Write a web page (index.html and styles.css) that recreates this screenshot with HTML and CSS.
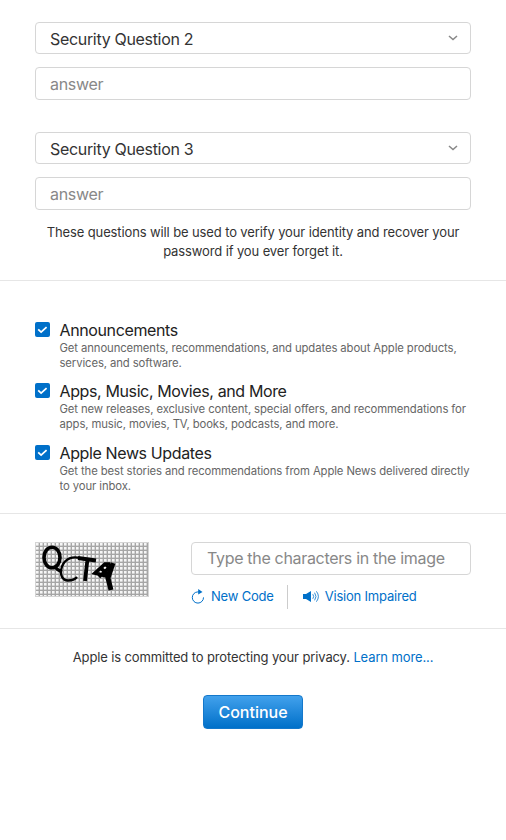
FILE: index.html
```html
<!DOCTYPE html>
<html lang="en">
<head>
    <meta charset="UTF-8">
    <meta name="viewport" content="width=device-width, initial-scale=1.0">
    <title>Create Your Apple ID</title>
    <link rel="stylesheet" href="styles.css">
</head>
<body>
    <form>
        <!-- Security questions -->
        <section class="questions">
            <div class="question">
                <div class="select-box">
                    <select class="field" aria-label="Security Question 2">
                        <option>Security Question 2</option>
                    </select>
                    <svg class="chevron" viewBox="0 0 10 6"><path d="M1 1l4 3.6L9 1"/></svg>
                </div>
                <input class="field answer" type="text" placeholder="answer">
            </div>
            <div class="question">
                <div class="select-box">
                    <select class="field" aria-label="Security Question 3">
                        <option>Security Question 3</option>
                    </select>
                    <svg class="chevron" viewBox="0 0 10 6"><path d="M1 1l4 3.6L9 1"/></svg>
                </div>
                <input class="field answer" type="text" placeholder="answer">
            </div>
            <p class="note">These questions will be used to verify your identity and recover your<br>password if you ever forget it.</p>
        </section>

        <!-- Email preferences -->
        <section class="preferences">
            <label class="preference">
                <input type="checkbox" checked>
                <svg class="check" viewBox="0 0 15 15"><path d="M3.2 7.4l2.9 2.7 5.500-5"/></svg>
                <span class="preference-text">
                    <span class="title">Announcements</span>
                    <span class="desc">Get announcements, recommendations, and updates about Apple products,<br>services, and software.</span>
                </span>
            </label>
            <label class="preference">
                <input type="checkbox" checked>
                <svg class="check" viewBox="0 0 15 15"><path d="M3.2 7.4l2.9 2.7 5.500-5"/></svg>
                <span class="preference-text">
                    <span class="title">Apps, Music, Movies, and More</span>
                    <span class="desc">Get new releases, exclusive content, special offers, and recommendations for<br>apps, music, movies, TV, books, podcasts, and more.</span>
                </span>
            </label>
            <label class="preference">
                <input type="checkbox" checked>
                <svg class="check" viewBox="0 0 15 15"><path d="M3.2 7.4l2.9 2.7 5.500-5"/></svg>
                <span class="preference-text">
                    <span class="title">Apple News Updates</span>
                    <span class="desc">Get the best stories and recommendations from Apple News delivered directly<br>to your inbox.</span>
                </span>
            </label>
        </section>

        <!-- Captcha -->
        <section class="captcha">
            <svg class="captcha-image" viewBox="0 0 114 55">
                <defs>
                    <pattern id="grid" width="4" height="4" patternUnits="userSpaceOnUse">
                        <rect width="4" height="4" fill="#a6a6a6"/>
                        <rect x="1" y="1" width="2.6" height="2.6" fill="#f6f6f6"/>
                    </pattern>
                </defs>
                <rect width="114" height="55" fill="url(#grid)"/>
                <rect x=".5" y=".5" width="113" height="54" fill="none" stroke="#d4d4d4"/>
                <g fill="none" stroke="#000">
                    <ellipse cx="17" cy="15.5" rx="8" ry="10.3" stroke-width="3.6"/>
                    <path d="M19 24q3 4 8 6" stroke-width="3"/>
                    <path d="M46 16.5c-8-3-16 0-19 8-3 9 1 14 6 14 4 0 7-1 9-3.5" stroke-width="2.3"/>
                    <path d="M43 16l18 2.5M52.5 17l-2.500 22" stroke-width="3.8"/>
                    <path d="M75 22h-5L60 31l15 4M65 26l10 7M64 35l12-11" stroke-width="3.6"/>
                    <path d="M78 21l-5 15 3 12" stroke-width="5"/>
                    <path d="M70 22l6 6-4 10" stroke-width="3"/>
                </g>
            </svg>
            <div class="captcha-entry">
                <input class="field" type="text" placeholder="Type the characters in the image">
                <div class="captcha-links">
                    <a class="link" href="#">
                        <svg class="reload" viewBox="0 0 14 15"><path d="M9 2.9H6.8a5.600 5.600 0 1 0 5.700 5.500"/><path class="fill" d="M7.2 0l4.300 2.900-4.300 2.700z"/></svg>
                        <span>New Code</span>
                    </a>
                    <a class="link" href="#">
                        <svg class="speaker" viewBox="0 0 17 13"><path class="fill" d="M0 4h3l5-3v11L3 9H0z"/><path d="M9.800 4.200q1.800 2.300 0 4.600M11.600 2.700q2.800 3.800 0 7.600M13.400 1.300q4 5.200 0 10.400"/></svg>
                        <span>Vision Impaired</span>
                    </a>
                </div>
            </div>
        </section>

        <section class="finish">
            <p class="privacy">Apple is committed to protecting your privacy. <a href="#">Learn more...</a></p>
            <button type="button">Continue</button>
        </section>
    </form>
</body>
</html>
```
FILE: styles.css
```css
* {
    box-sizing: border-box;
}

body {
    margin: 0;
    background-color: #ffffff;
    color: #333333;
    font-family: "Inter", "Liberation Sans", sans-serif;
    font-size: 13px;
    letter-spacing: -0.12px;
}

section {
    padding-left: 35px;
    padding-right: 35px;
}

p {
    margin: 0;
}

a {
    color: #0070c9;
    text-decoration: none;
}

.field {
    display: block;
    width: 100%;
    height: 33px;
    padding: 0 15px 1px;
    border: 1px solid #d6d6d6;
    border-radius: 4px;
    background-color: #ffffff;
    color: #333333;
    font-family: inherit;
    font-size: 16px;
    letter-spacing: -0.32px;
    outline: none;
}

.field::placeholder {
    color: #888888;
    opacity: 1;
}

.answer {
    padding: 0 14px;
}

/* Security questions */
.questions {
    height: 281px;
    padding-top: 22px;
    border-bottom: 1px solid #e6e6e6;
}

.question {
    margin-bottom: 32px;
}

.select-box {
    display: grid;
    align-items: center;
    margin-bottom: 13px;
}

.select-box select,
.chevron {
    grid-area: 1 / 1;
}

.select-box select {
    height: 32px;
    padding: 2px 14px 0;
    appearance: none;
}

.chevron {
    justify-self: end;
    width: 10px;
    height: 6px;
    margin-right: 13px;
    fill: none;
    stroke: #888888;
    stroke-width: 1.5;
    pointer-events: none;
}

.note {
    margin-top: -19px;
    line-height: 19px;
    text-align: center;
}

/* Email preferences */
.preferences {
    height: 233px;
    padding-top: 41px;
    border-bottom: 1px solid #e6e6e6;
}

.preference {
    display: flex;
    height: 62px;
}

.preference:first-child {
    height: 61px;
}

.preference input {
    appearance: none;
    width: 0;
    margin: 0;
}

.check {
    flex: none;
    width: 15px;
    height: 15px;
    margin: 0 9.5px 0 0;
    border-radius: 2px;
    background-color: #0070c9;
    fill: none;
    stroke: #ffffff;
    stroke-width: 1.8;
}

.preference-text {
    margin-top: -1px;
}

.title,
.desc {
    display: block;
    white-space: nowrap;
}

.title {
    margin-bottom: 2px;
    color: #222222;
    font-size: 16px;
    line-height: 18px;
    letter-spacing: -0.38px;
}

.desc {
    color: #666666;
    font-size: 11.3px;
    line-height: 15px;
    letter-spacing: -0.1px;
}

/* Captcha */
.captcha {
    display: flex;
    gap: 42px;
    height: 115px;
    padding-top: 28px;
    border-bottom: 1px solid #e6e6e6;
}

.captcha-image {
    flex: none;
    width: 114px;
    height: 55px;
}

.captcha-entry {
    flex: 1;
}

.captcha-links {
    display: flex;
    height: 24px;
    margin-top: 10px;
    letter-spacing: -0.2px;
}

.link {
    display: flex;
    align-items: center;
    padding-bottom: 2px;
}

.link + .link {
    margin-left: 13px;
    padding-left: 15px;
    border-left: 1px solid #cccccc;
}

.link svg {
    fill: none;
    stroke: #0070c9;
}

.link .fill {
    fill: #0070c9;
    stroke: none;
}

.reload {
    width: 14px;
    height: 15px;
    margin-right: 6px;
}

.speaker {
    width: 17px;
    height: 13px;
    margin-right: 5px;
    stroke-width: 0.8;
}

/* Privacy and submit */
.finish {
    padding-top: 19px;
    text-align: center;
}

.privacy {
    line-height: 19px;
}

button {
    width: 100px;
    height: 34px;
    margin-top: 28px;
    padding: 0;
    border: 1px solid #1478cb;
    border-radius: 4px;
    background: linear-gradient(#42a1ec, #0070c9);
    color: #ffffff;
    font-family: inherit;
    font-size: 16px;
    font-weight: 500;
}
```
